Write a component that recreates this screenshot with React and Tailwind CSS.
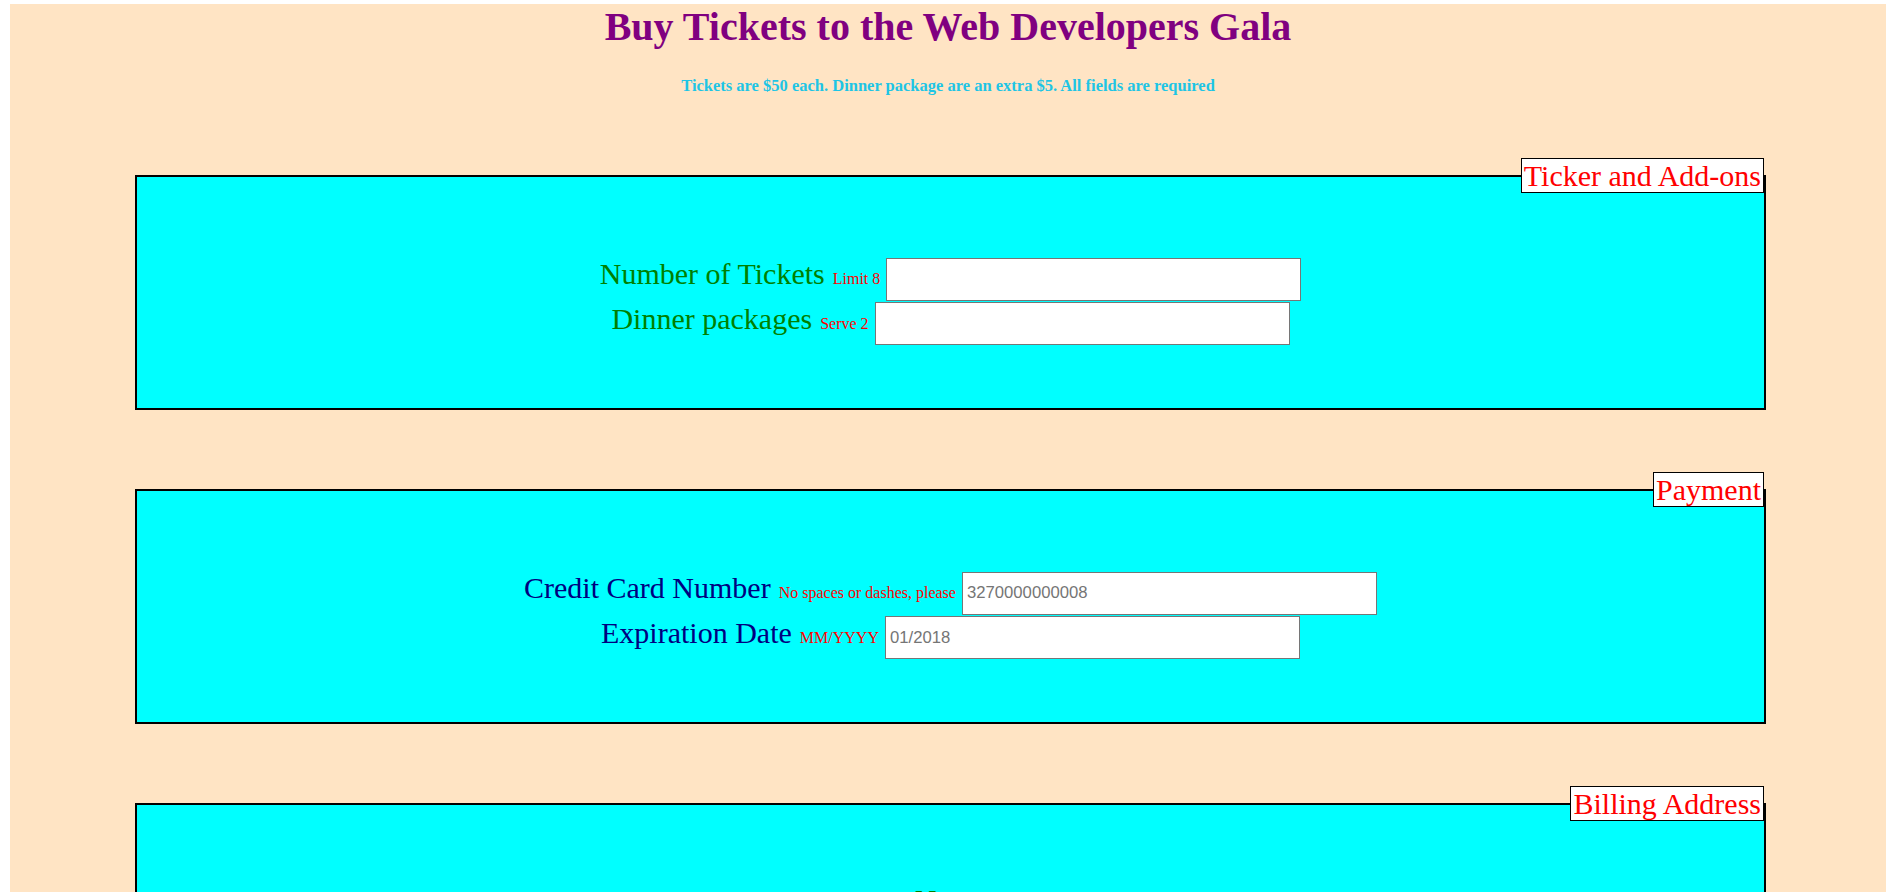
const serif = "font-['Liberation_Serif',serif]";

function Field({ label, hint, placeholder, color }) {
  return (
    <div className="flex justify-center items-baseline">
      <span className={`text-[30px] leading-[34px] ${color}`}>{label}</span>
      {hint && <span className="ml-2 mr-[6px] text-[16px] leading-[19px] text-[#ff0000]">{hint}</span>}
      <input
        type="text"
        placeholder={placeholder}
        className="w-[415px] h-[43px] bg-white border border-[#767676] px-[4px] text-[16.7px] text-black font-['Liberation_Sans',sans-serif] placeholder:text-[#757575] outline-none"
      />
    </div>
  );
}

function Section({ legend, children, first, top = "pt-[80px]" }) {
  return (
    <div
      className={`relative ml-[125px] mr-[120px] border-2 border-black bg-[#00ffff] ${top} pb-[62.5px] ${
        first ? "mt-[80px]" : "mt-[79.5px]"
      }`}
    >
      <div className="absolute right-0 top-[-19px] bg-white border border-black px-[2px] text-[30px] leading-[33px] text-[#ff0000]">
        {legend}
      </div>
      <div className="flex flex-col gap-px">{children}</div>
    </div>
  );
}

export default function App() {
  return (
    <div className={`h-[892px] overflow-hidden bg-white pt-px pl-[10px] ${serif}`}>
      <div className="bg-[#ffe4c4] pb-10">
        <h1 className="mt-[3px] text-center text-[40px] leading-[46px] font-bold text-[#800080]">
          Buy Tickets to the Web Developers Gala
        </h1>
        <p className="mt-[26px] text-center text-[16.5px] leading-[19px] font-bold text-[#1ec5e5]">
          Tickets are $50 each. Dinner package are an extra $5. All fields are required
        </p>

        <Section legend="Ticker and Add-ons" first>
          <Field label="Number of Tickets" hint="Limit 8" color="text-[#008000]" />
          <Field label="Dinner packages" hint="Serve 2" color="text-[#008000]" />
        </Section>

        <Section legend="Payment">
          <Field
            label="Credit Card Number"
            hint="No spaces or dashes, please"
            placeholder="3270000000008"
            color="text-[#000080]"
          />
          <Field label="Expiration Date" hint="MM/YYYY" placeholder="01/2018" color="text-[#000080]" />
        </Section>

        <Section legend="Billing Address" top="pt-[78px]">
          <div className="text-center text-[30px] leading-[34px] text-[#008000]">Name</div>
          <Field label="First Name" color="text-[#008000]" />
          <Field label="Last Name" color="text-[#008000]" />
          <Field label="Street Address" color="text-[#008000]" />
          <Field label="City" color="text-[#008000]" />
        </Section>
      </div>
    </div>
  );
}
